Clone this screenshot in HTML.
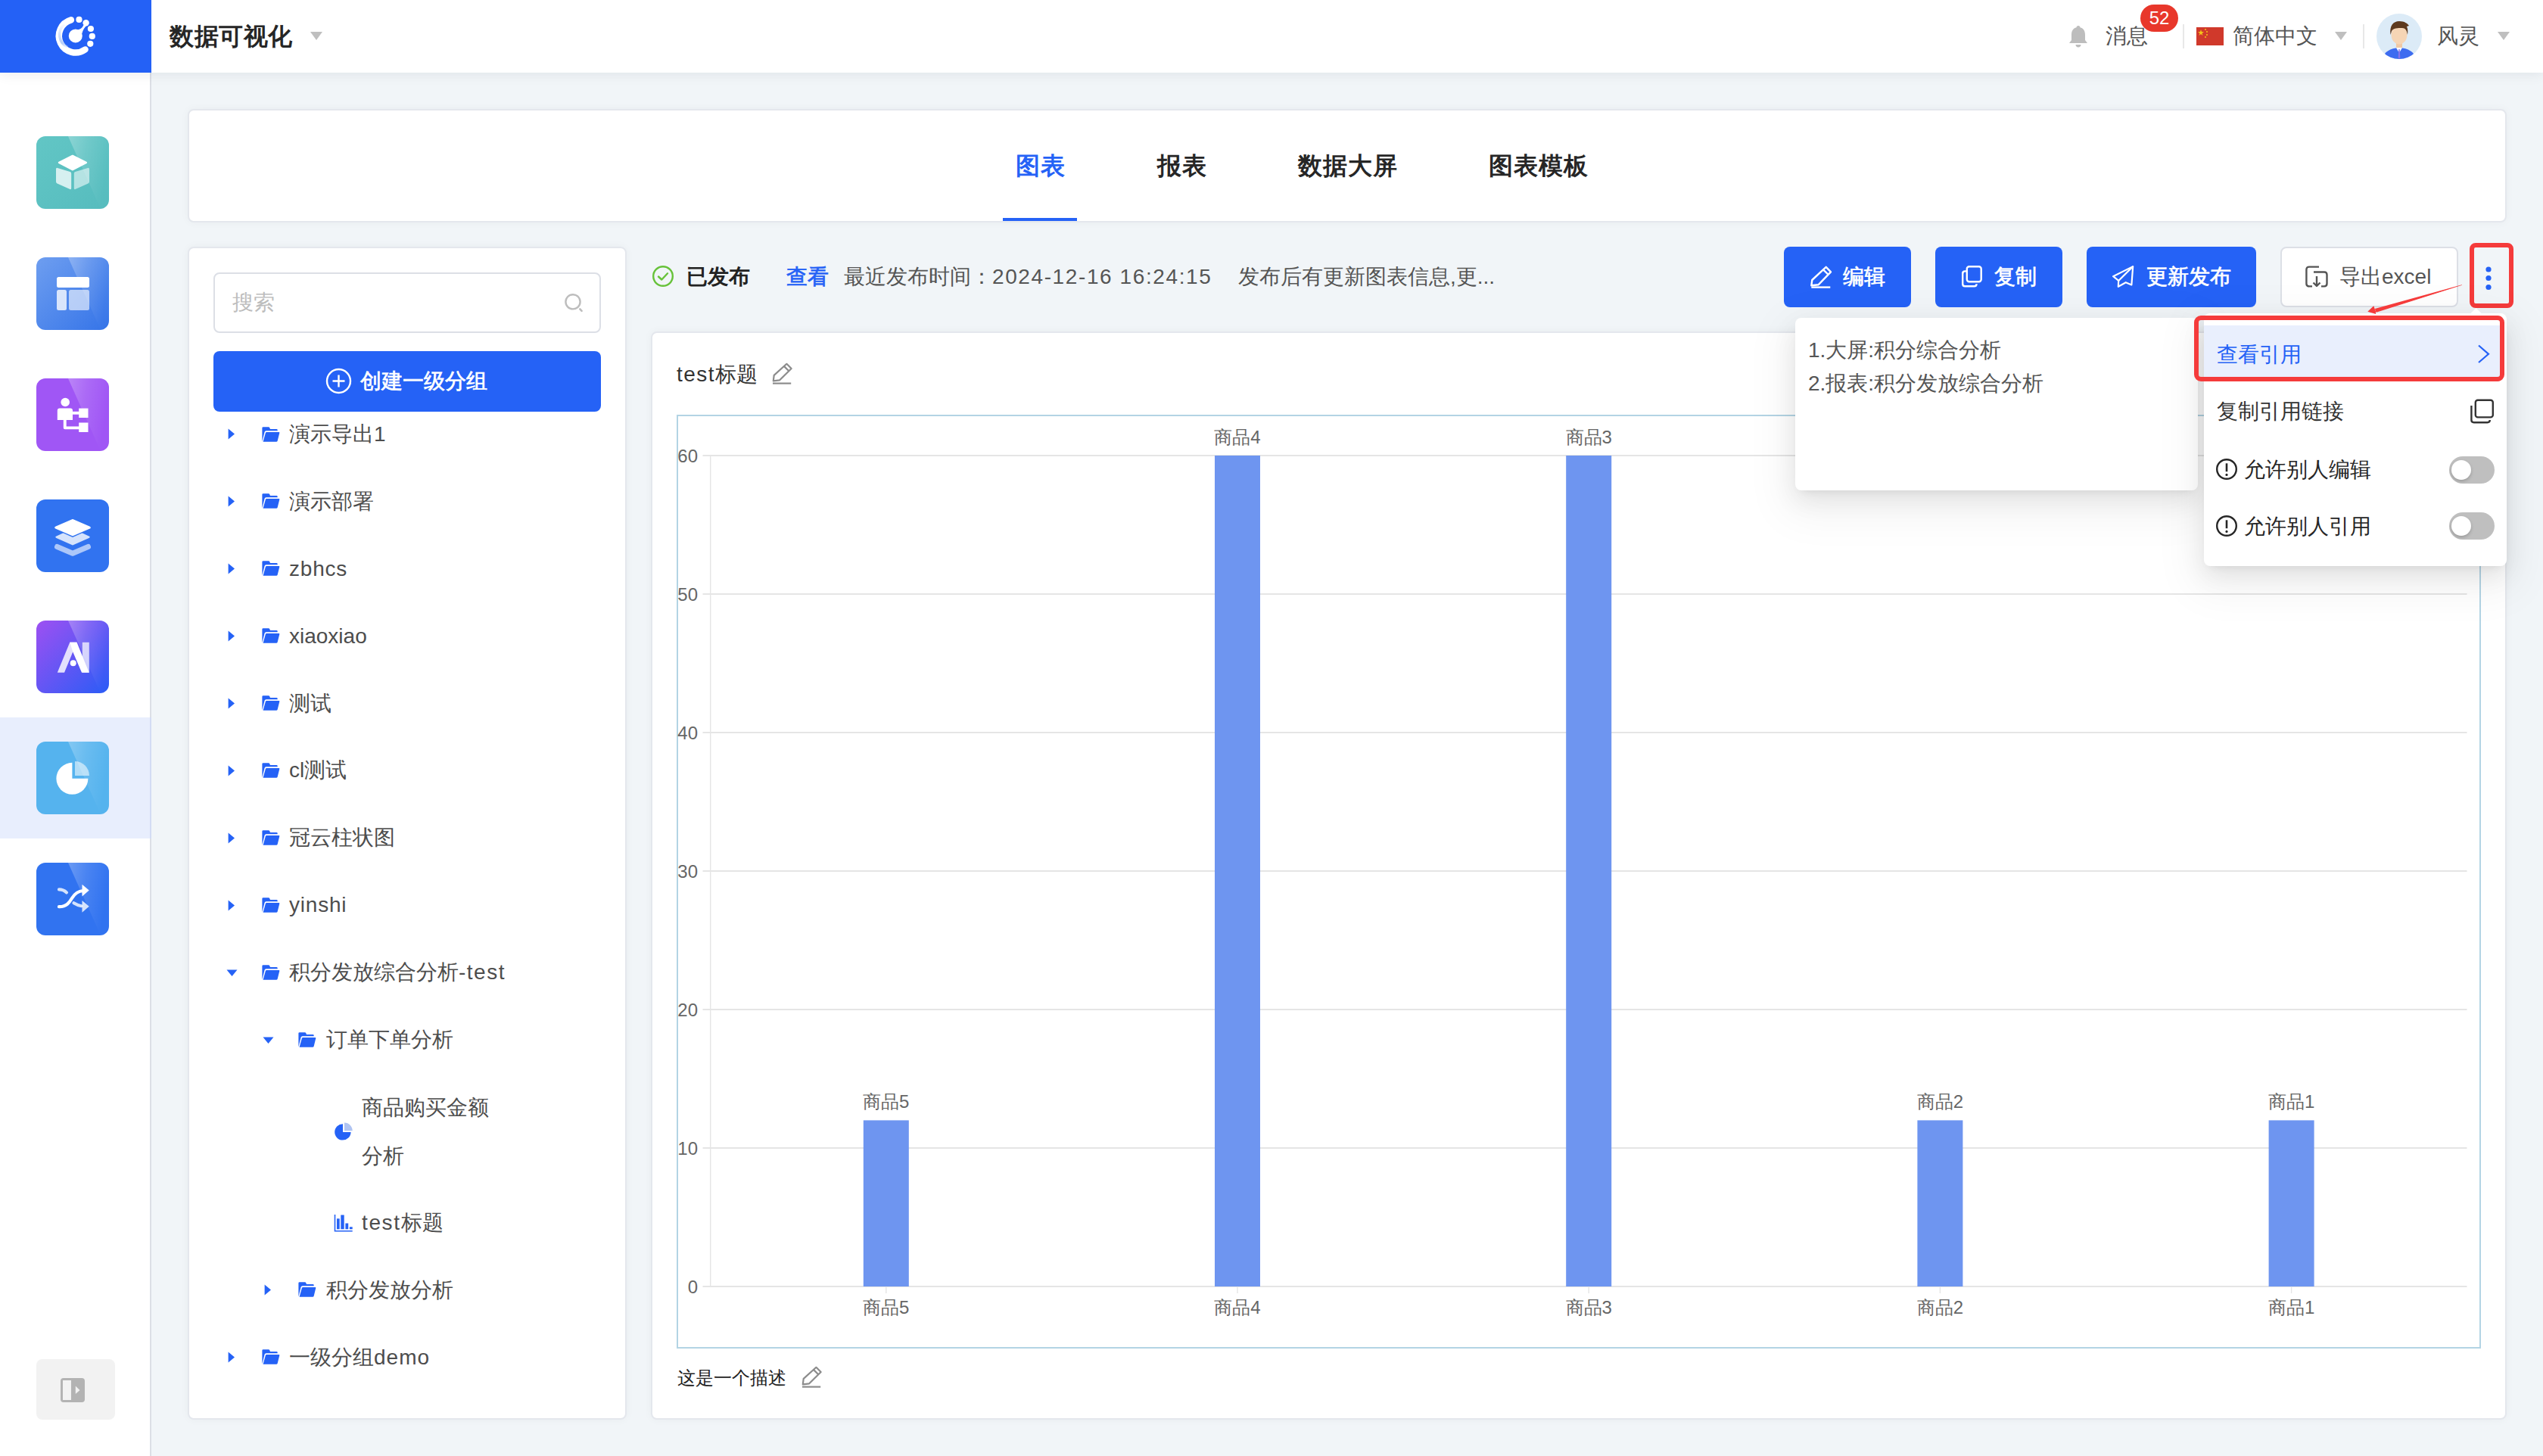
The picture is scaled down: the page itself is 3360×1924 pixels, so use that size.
<!DOCTYPE html>
<html><head><meta charset="utf-8">
<style>
*{box-sizing:border-box;margin:0;padding:0}
html,body{width:3360px;height:1924px;overflow:hidden;background:#F1F5F8;font-family:"Liberation Sans",sans-serif;color:#555}
.abs{position:absolute}
.t{position:absolute;white-space:nowrap;line-height:1}
/* header */
#hdr{position:absolute;left:0;top:0;width:3360px;height:96px;background:#fff;z-index:5;box-shadow:0 2px 16px rgba(0,21,41,0.08)}
#logo{position:absolute;left:0;top:0;width:200px;height:96px;background:#2461F6}
/* sidebar */
#side{position:absolute;left:0;top:96px;width:200px;height:1828px;background:#fff;border-right:2px solid #DCDFE6;z-index:3}
.sic{position:absolute;left:48px;width:96px;height:96px;border-radius:12px;overflow:hidden}
.sic .gl{position:absolute;left:0;top:0;width:96px;height:96px}
.card{position:absolute;background:#fff;border:2px solid #E4E7ED;border-radius:8px;box-shadow:0 0 12px rgba(20,30,60,0.04)}
</style></head>
<body>
<div id="hdr">
  <div id="logo"><svg width="200" height="96" viewBox="0 0 200 96">
    <defs><linearGradient id="lg1" gradientUnits="userSpaceOnUse" x1="0" y1="30" x2="0" y2="64"><stop offset="0" stop-color="#B4CCF8" stop-opacity="0"/><stop offset="0.8" stop-color="#B4CCF8" stop-opacity="1"/><stop offset="1" stop-color="#B4CCF8" stop-opacity="0"/></linearGradient></defs>
    <path d="M93.9 26.3 A22 22 0 1 0 112.6 65.4" fill="none" stroke="#fff" stroke-width="8.5" stroke-linecap="round"/>
    <path d="M85 32 A18.3 18.3 0 0 0 89.5 62.5" fill="none" stroke="url(#lg1)" stroke-width="3.4"/>
    <circle cx="99.8" cy="47.4" r="9" fill="#fff"/>
    <path d="M101 39.5 Q108 39 110.5 33 L116.5 32 Q110 37 108.5 44 Z" fill="#fff"/>
    <circle cx="113.6" cy="30.3" r="4.2" fill="#fff"/>
    <circle cx="104.5" cy="25.9" r="4.1" fill="#fff"/>
    <circle cx="119.9" cy="38" r="4.1" fill="#fff"/>
    <circle cx="121.8" cy="47.9" r="4.1" fill="#fff"/>
    <circle cx="119.3" cy="57.8" r="4.1" fill="#fff"/>
  </svg></div>
  <div class="t" style="left:224px;top:32px;font-size:32px;font-weight:bold;color:#262626;letter-spacing:0.6px">数据可视化</div>
  <svg class="abs" style="left:408px;top:41px" width="20" height="14" viewBox="0 0 20 14"><path d="M2 1 L18 1 L10 12 Z" fill="#BFBFBF"/></svg>
  <!-- right -->
  <svg class="abs" style="left:2732px;top:32px" width="28" height="32" viewBox="0 0 28 32"><path d="M14 2 C15.6 2 16.4 3 16.4 4.2 C21 5.4 23 9 23 14 L23 21 L26 25 L2 25 L5 21 L5 14 C5 9 7 5.4 11.6 4.2 C11.6 3 12.4 2 14 2 Z" fill="#BDBDBD"/><path d="M10.5 27 L17.5 27 C17.5 29 16 30.5 14 30.5 C12 30.5 10.5 29 10.5 27 Z" fill="#BDBDBD"/></svg>
  <div class="t" style="left:2782px;top:34px;font-size:28px;color:#555">消息</div>
  <div class="abs" style="left:2828px;top:6px;width:50px;height:36px;border-radius:18px;background:#E8372B;color:#fff;font-size:24px;line-height:36px;text-align:center">52</div>
  <div class="abs" style="left:2884px;top:32px;width:2px;height:32px;background:#E8E8E8"></div>
  <div class="abs" style="left:2902px;top:36px;width:36px;height:24px;background:#D0392B"><svg width="36" height="24" viewBox="0 0 36 24" style="display:block"><polygon points="6,3 7,6 10,6 7.5,8 8.5,11 6,9 3.5,11 4.5,8 2,6 5,6" fill="#F5C518"/><circle cx="12" cy="3" r="1" fill="#F5C518"/><circle cx="14" cy="6" r="1" fill="#F5C518"/><circle cx="14" cy="10" r="1" fill="#F5C518"/><circle cx="12" cy="13" r="1" fill="#F5C518"/></svg></div>
  <div class="t" style="left:2950px;top:34px;font-size:28px;color:#555">简体中文</div>
  <svg class="abs" style="left:3083px;top:41px" width="20" height="14" viewBox="0 0 20 14"><path d="M2 1 L18 1 L10 12 Z" fill="#BFBFBF"/></svg>
  <div class="abs" style="left:3122px;top:32px;width:2px;height:32px;background:#E8E8E8"></div>
  <div class="abs" style="left:3140px;top:18px;width:60px;height:60px;border-radius:30px;background:#DCEBF7;overflow:hidden">
    <svg width="60" height="60" viewBox="0 0 60 60"><path d="M8 60 C10 50 18 46 30 45 C42 46 50 50 52 60 Z" fill="#3D6CF0"/><path d="M26 45 L30 52 L34 45 Z" fill="#fff"/><path d="M29.3 47 L30.7 47 L31.3 58 L30 60 L28.7 58 Z" fill="#8A74E8"/><rect x="26" y="36" width="8" height="9" fill="#F0C9A5"/><ellipse cx="30" cy="28" rx="10.5" ry="12.5" fill="#F6D5B5"/><path d="M18.5 28 C17 16 22 10 30 10 C37 10 41 13 43 16 L40 17 C41.5 20 41.5 24 41 28 C40 22 38 19 34 19 C28 19 22 19 20 23 Z" fill="#5E3A1E"/></svg>
  </div>
  <div class="t" style="left:3220px;top:34px;font-size:28px;color:#555">风灵</div>
  <svg class="abs" style="left:3298px;top:41px" width="20" height="14" viewBox="0 0 20 14"><path d="M2 1 L18 1 L10 12 Z" fill="#BFBFBF"/></svg>
</div>
<div id="side">
<svg width="0" height="0" style="position:absolute"><defs>
<clipPath id="rc"><rect width="96" height="96" rx="12"/></clipPath>
<linearGradient id="gls" x1="0" y1="0" x2="1" y2="0.3"><stop offset="0" stop-color="#fff" stop-opacity="0.28"/><stop offset="0.45" stop-color="#fff" stop-opacity="0.12"/><stop offset="1" stop-color="#fff" stop-opacity="0"/></linearGradient>
<linearGradient id="g2" x1="0" y1="0" x2="1" y2="1"><stop offset="0" stop-color="#6E9EF0"/><stop offset="1" stop-color="#3574E8"/></linearGradient>
<linearGradient id="g5" x1="0" y1="0" x2="1" y2="1"><stop offset="0" stop-color="#9E50F2"/><stop offset="1" stop-color="#2A5CF6"/></linearGradient>
<linearGradient id="g1" x1="0" y1="0" x2="1" y2="1"><stop offset="0" stop-color="#62C6C5"/><stop offset="1" stop-color="#56BCBE"/></linearGradient>
</defs></svg>
<div class="abs" style="left:0;top:852px;width:198px;height:160px;background:#E8EEFD"></div><div class="abs" style="left:198px;top:852px;width:2px;height:160px;background:#D3DCF3"></div>
<svg class="abs" style="left:48px;top:84px" width="96" height="96" viewBox="0 0 96 96"><rect width="96" height="96" rx="12" fill="url(#g1)"/><g clip-path="url(#rc)"><path d="M42 0 L96 0 L96 96 L85 96 Z" fill="url(#gls)"/></g><path d="M47.9 26 L65.8 34.9 L47.9 44.1 L30.1 34.9 Z" fill="#fff" stroke="#fff" stroke-width="2.6" stroke-linejoin="round"/><path d="M26 43.5 Q26 41.3 28 41.9 L44.6 47 Q46.2 47.5 46.2 49.2 L46.2 68.8 Q46.2 70.8 44.4 70 L27.6 62.5 Q26 61.8 26 60 Z" fill="#fff" fill-opacity="0.75"/><path d="M49.8 49.2 Q49.8 47.5 51.4 47 L68 41.9 Q70 41.3 70 43.5 L70 60 Q70 61.8 68.4 62.5 L51.6 70 Q49.8 70.8 49.8 68.8 Z" fill="#fff" fill-opacity="0.55"/></svg><svg class="abs" style="left:48px;top:244px" width="96" height="96" viewBox="0 0 96 96"><rect width="96" height="96" rx="12" fill="url(#g2)"/><g clip-path="url(#rc)"><path d="M42 0 L96 0 L96 96 L85 96 Z" fill="url(#gls)"/></g><rect x="27" y="26" width="43" height="14" rx="2.5" fill="#fff"/><rect x="27" y="43" width="13" height="27" rx="2.5" fill="#fff" fill-opacity="0.78"/><rect x="43" y="43" width="27" height="27" rx="2.5" fill="#fff" fill-opacity="0.6"/></svg><svg class="abs" style="left:48px;top:404px" width="96" height="96" viewBox="0 0 96 96"><rect width="96" height="96" rx="12" fill="#A056F5"/><g clip-path="url(#rc)"><path d="M42 0 L96 0 L96 96 L85 96 Z" fill="url(#gls)"/></g><circle cx="38.2" cy="31.5" r="5.8" fill="#fff"/><path d="M27.8 42.6 Q27.8 39.6 30.8 39.6 L45 39.6 Q48 39.6 48 42.6 L48 55 L27.8 55 Z" fill="#fff"/><rect x="56.2" y="39.6" width="12.3" height="12.4" fill="#fff"/><rect x="47" y="43.8" width="10" height="3.9" fill="#fff"/><path d="M35.8 54 L39.7 54 L39.7 63.5 L57 63.5 L57 67.3 L37.8 67.3 Q35.8 67.3 35.8 65.3 Z" fill="#fff"/><rect x="56.2" y="58.5" width="12.3" height="12.5" fill="#fff"/></svg><svg class="abs" style="left:48px;top:564px" width="96" height="96" viewBox="0 0 96 96"><rect width="96" height="96" rx="12" fill="#3173F0"/><g clip-path="url(#rc)"></g><path d="M27.5 62.5 L48 71.2 L68.5 62.5" fill="none" stroke="#fff" stroke-opacity="0.6" stroke-width="7" stroke-linecap="round" stroke-linejoin="round"/><path d="M48 38.5 L69.5 48.6 Q72 49.8 69.5 51 L48 60.5 L26.5 51 Q24 49.8 26.5 48.6 Z" fill="#fff" fill-opacity="0.8" stroke="#fff" stroke-opacity="0" /><path d="M48 24.2 L73 35.6 Q76.5 37.2 73 38.8 L48 50 L23 38.8 Q19.5 37.2 23 35.6 Z" fill="#3173F0"/><path d="M48 26.8 L70 36.3 Q72.2 37.2 70 38.1 L48 47.6 L26 38.1 Q23.8 37.2 26 36.3 Z" fill="#fff" stroke="#fff" stroke-width="1.5" stroke-linejoin="round"/></svg><svg class="abs" style="left:48px;top:724px" width="96" height="96" viewBox="0 0 96 96"><rect width="96" height="96" rx="12" fill="url(#g5)"/><g clip-path="url(#rc)"><path d="M42 0 L96 0 L96 96 L85 96 Z" fill="url(#gls)"/></g><rect x="60.8" y="28.8" width="9" height="40" fill="#fff" fill-opacity="0.72"/><path d="M44.3 28.8 L53.5 28.8 L37 68.8 L27.8 68.8 Z" fill="#fff" fill-opacity="0.82"/><path d="M44.3 28.8 L53.5 28.8 L69.7 68.8 L60 68.8 L48.2 41.3 Z" fill="#fff"/><circle cx="48.7" cy="56.3" r="4" fill="#fff"/></svg><svg class="abs" style="left:48px;top:884px" width="96" height="96" viewBox="0 0 96 96"><rect width="96" height="96" rx="12" fill="#55B3EE"/><g clip-path="url(#rc)"><path d="M42 0 L96 0 L96 96 L85 96 Z" fill="url(#gls)"/></g><path d="M47.4 27.8 L47.4 48.8 L68.4 48.8 A21 21 0 1 1 47.4 27.8 Z" fill="#fff"/><path d="M51 26 A19 19 0 0 1 70 45 L51 45 Z" fill="#fff" fill-opacity="0.55"/></svg><svg class="abs" style="left:48px;top:1044px" width="96" height="96" viewBox="0 0 96 96"><rect width="96" height="96" rx="12" fill="#3173F0"/><g clip-path="url(#rc)"><path d="M42 0 L96 0 L96 96 L85 96 Z" fill="url(#gls)"/></g><path d="M30 58.2 C40 58.5 44 52 47 47 C50.5 41 55 37.5 62 37" fill="none" stroke="#fff" stroke-width="4.2" stroke-linecap="round"/><path d="M60.5 28.8 L69.7 36.6 L60.5 44.6 Z" fill="#fff"/><path d="M30 35.4 C34 35.4 37.5 37 40 39.4" fill="none" stroke="#fff" stroke-opacity="0.8" stroke-width="4.2" stroke-linecap="round"/><path d="M49.5 53.3 C53 55.5 56 56.6 59.5 57.2" fill="none" stroke="#fff" stroke-opacity="0.8" stroke-width="4.2" stroke-linecap="round"/><path d="M60.5 50 L69.7 57.7 L60.5 65.8 Z" fill="#fff" fill-opacity="0.8"/></svg><div class="abs" style="left:48px;top:1700px;width:104px;height:80px;border-radius:8px;background:#F2F2F2"><svg class="abs" style="left:32px;top:25px" width="32" height="32" viewBox="0 0 32 32"><rect width="32" height="32" rx="4" fill="#B3B3B3"/><rect x="3" y="3" width="11" height="26" fill="#F2F2F2"/><path d="M19.8 10.5 L25.5 16 L19.8 21 Z" fill="#F2F2F2"/></svg></div>
</div>
<!-- tabs card -->
<div class="card" style="left:248px;top:144px;width:3064px;height:150px"></div>
<div class="t" style="left:1342px;top:203px;font-size:32px;font-weight:bold;color:#2562F6;letter-spacing:1px">图表</div>
<div class="t" style="left:1529px;top:203px;font-size:32px;font-weight:bold;color:#262626;letter-spacing:1px">报表</div>
<div class="t" style="left:1715px;top:203px;font-size:32px;font-weight:bold;color:#262626;letter-spacing:1px">数据大屏</div>
<div class="t" style="left:1967px;top:203px;font-size:32px;font-weight:bold;color:#262626;letter-spacing:1px">图表模板</div>
<div class="abs" style="left:1325px;top:288px;width:98px;height:4px;background:#2562F6"></div>

<!-- left panel -->
<div class="card" style="left:248px;top:326px;width:580px;height:1550px"></div>
<div class="abs" style="left:282px;top:360px;width:512px;height:80px;border:2px solid #DCDFE6;border-radius:8px;background:#fff"></div>
<div class="t" style="left:307px;top:386px;font-size:28px;color:#BDBDBD">搜索</div>
<svg class="abs" style="left:744px;top:386px" width="28" height="28" viewBox="0 0 28 28"><circle cx="13" cy="12.8" r="9.6" fill="none" stroke="#BDBDBD" stroke-width="2.4"/><path d="M22.3 22.4 L24.6 24.8" stroke="#BDBDBD" stroke-width="2.6" stroke-linecap="round"/></svg>
<div class="abs" style="left:282px;top:464px;width:512px;height:80px;border-radius:8px;background:#2562F6"></div>
<svg class="abs" style="left:430px;top:486px" width="36" height="36" viewBox="0 0 36 36"><circle cx="17.5" cy="17.5" r="15.5" fill="none" stroke="#fff" stroke-width="2.4"/><path d="M17.5 9.5 V25.5 M9.5 17.5 H25.5" stroke="#fff" stroke-width="2.4"/></svg>
<div class="t" style="left:476px;top:490px;font-size:28px;color:#fff;-webkit-text-stroke:0.7px #fff">创建一级分组</div>
<svg class="abs" style="left:301px;top:566px" width="10" height="15" viewBox="0 0 10 15"><path d="M0.6 0.5 L9 7.5 L0.6 14.5 Z" fill="#2562F6"/></svg>
<svg class="abs" style="left:346px;top:564px" width="24" height="21" viewBox="0 0 24 21"><path d="M0.4 19.5 L0.4 1.6 Q0.4 0.2 1.8 0.2 L8.8 0.2 Q9.9 0.2 10.4 1.4 L11 2.9 L19.3 2.9 Q20.7 2.9 20.7 4.3 L20.7 5.2 L5.6 5.2 Q4 5.2 3.6 6.7 Z" fill="#2562F6"/><path d="M4.9 7.9 Q5.2 6.9 6.3 6.9 L22.4 6.9 Q23.6 6.9 23.3 8.1 L20.7 18.6 Q20.3 19.8 19.1 19.8 L1.6 19.8 Z" fill="#2562F6"/></svg>
<div class="t" style="left:382px;top:560px;font-size:28px;color:#4D4D4D">演示导出1</div>
<svg class="abs" style="left:301px;top:655px" width="10" height="15" viewBox="0 0 10 15"><path d="M0.6 0.5 L9 7.5 L0.6 14.5 Z" fill="#2562F6"/></svg>
<svg class="abs" style="left:346px;top:652px" width="24" height="21" viewBox="0 0 24 21"><path d="M0.4 19.5 L0.4 1.6 Q0.4 0.2 1.8 0.2 L8.8 0.2 Q9.9 0.2 10.4 1.4 L11 2.9 L19.3 2.9 Q20.7 2.9 20.7 4.3 L20.7 5.2 L5.6 5.2 Q4 5.2 3.6 6.7 Z" fill="#2562F6"/><path d="M4.9 7.9 Q5.2 6.9 6.3 6.9 L22.4 6.9 Q23.6 6.9 23.3 8.1 L20.7 18.6 Q20.3 19.8 19.1 19.8 L1.6 19.8 Z" fill="#2562F6"/></svg>
<div class="t" style="left:382px;top:649px;font-size:28px;color:#4D4D4D">演示部署</div>
<svg class="abs" style="left:301px;top:744px" width="10" height="15" viewBox="0 0 10 15"><path d="M0.6 0.5 L9 7.5 L0.6 14.5 Z" fill="#2562F6"/></svg>
<svg class="abs" style="left:346px;top:741px" width="24" height="21" viewBox="0 0 24 21"><path d="M0.4 19.5 L0.4 1.6 Q0.4 0.2 1.8 0.2 L8.8 0.2 Q9.9 0.2 10.4 1.4 L11 2.9 L19.3 2.9 Q20.7 2.9 20.7 4.3 L20.7 5.2 L5.6 5.2 Q4 5.2 3.6 6.7 Z" fill="#2562F6"/><path d="M4.9 7.9 Q5.2 6.9 6.3 6.9 L22.4 6.9 Q23.6 6.9 23.3 8.1 L20.7 18.6 Q20.3 19.8 19.1 19.8 L1.6 19.8 Z" fill="#2562F6"/></svg>
<div class="t" style="left:382px;top:738px;font-size:28px;color:#4D4D4D;letter-spacing:0.8px">zbhcs</div>
<svg class="abs" style="left:301px;top:833px" width="10" height="15" viewBox="0 0 10 15"><path d="M0.6 0.5 L9 7.5 L0.6 14.5 Z" fill="#2562F6"/></svg>
<svg class="abs" style="left:346px;top:830px" width="24" height="21" viewBox="0 0 24 21"><path d="M0.4 19.5 L0.4 1.6 Q0.4 0.2 1.8 0.2 L8.8 0.2 Q9.9 0.2 10.4 1.4 L11 2.9 L19.3 2.9 Q20.7 2.9 20.7 4.3 L20.7 5.2 L5.6 5.2 Q4 5.2 3.6 6.7 Z" fill="#2562F6"/><path d="M4.9 7.9 Q5.2 6.9 6.3 6.9 L22.4 6.9 Q23.6 6.9 23.3 8.1 L20.7 18.6 Q20.3 19.8 19.1 19.8 L1.6 19.8 Z" fill="#2562F6"/></svg>
<div class="t" style="left:382px;top:827px;font-size:28px;color:#4D4D4D">xiaoxiao</div>
<svg class="abs" style="left:301px;top:922px" width="10" height="15" viewBox="0 0 10 15"><path d="M0.6 0.5 L9 7.5 L0.6 14.5 Z" fill="#2562F6"/></svg>
<svg class="abs" style="left:346px;top:919px" width="24" height="21" viewBox="0 0 24 21"><path d="M0.4 19.5 L0.4 1.6 Q0.4 0.2 1.8 0.2 L8.8 0.2 Q9.9 0.2 10.4 1.4 L11 2.9 L19.3 2.9 Q20.7 2.9 20.7 4.3 L20.7 5.2 L5.6 5.2 Q4 5.2 3.6 6.7 Z" fill="#2562F6"/><path d="M4.9 7.9 Q5.2 6.9 6.3 6.9 L22.4 6.9 Q23.6 6.9 23.3 8.1 L20.7 18.6 Q20.3 19.8 19.1 19.8 L1.6 19.8 Z" fill="#2562F6"/></svg>
<div class="t" style="left:382px;top:916px;font-size:28px;color:#4D4D4D">测试</div>
<svg class="abs" style="left:301px;top:1011px" width="10" height="15" viewBox="0 0 10 15"><path d="M0.6 0.5 L9 7.5 L0.6 14.5 Z" fill="#2562F6"/></svg>
<svg class="abs" style="left:346px;top:1008px" width="24" height="21" viewBox="0 0 24 21"><path d="M0.4 19.5 L0.4 1.6 Q0.4 0.2 1.8 0.2 L8.8 0.2 Q9.9 0.2 10.4 1.4 L11 2.9 L19.3 2.9 Q20.7 2.9 20.7 4.3 L20.7 5.2 L5.6 5.2 Q4 5.2 3.6 6.7 Z" fill="#2562F6"/><path d="M4.9 7.9 Q5.2 6.9 6.3 6.9 L22.4 6.9 Q23.6 6.9 23.3 8.1 L20.7 18.6 Q20.3 19.8 19.1 19.8 L1.6 19.8 Z" fill="#2562F6"/></svg>
<div class="t" style="left:382px;top:1004px;font-size:28px;color:#4D4D4D">cl测试</div>
<svg class="abs" style="left:301px;top:1100px" width="10" height="15" viewBox="0 0 10 15"><path d="M0.6 0.5 L9 7.5 L0.6 14.5 Z" fill="#2562F6"/></svg>
<svg class="abs" style="left:346px;top:1097px" width="24" height="21" viewBox="0 0 24 21"><path d="M0.4 19.5 L0.4 1.6 Q0.4 0.2 1.8 0.2 L8.8 0.2 Q9.9 0.2 10.4 1.4 L11 2.9 L19.3 2.9 Q20.7 2.9 20.7 4.3 L20.7 5.2 L5.6 5.2 Q4 5.2 3.6 6.7 Z" fill="#2562F6"/><path d="M4.9 7.9 Q5.2 6.9 6.3 6.9 L22.4 6.9 Q23.6 6.9 23.3 8.1 L20.7 18.6 Q20.3 19.8 19.1 19.8 L1.6 19.8 Z" fill="#2562F6"/></svg>
<div class="t" style="left:382px;top:1093px;font-size:28px;color:#4D4D4D">冠云柱状图</div>
<svg class="abs" style="left:301px;top:1189px" width="10" height="15" viewBox="0 0 10 15"><path d="M0.6 0.5 L9 7.5 L0.6 14.5 Z" fill="#2562F6"/></svg>
<svg class="abs" style="left:346px;top:1186px" width="24" height="21" viewBox="0 0 24 21"><path d="M0.4 19.5 L0.4 1.6 Q0.4 0.2 1.8 0.2 L8.8 0.2 Q9.9 0.2 10.4 1.4 L11 2.9 L19.3 2.9 Q20.7 2.9 20.7 4.3 L20.7 5.2 L5.6 5.2 Q4 5.2 3.6 6.7 Z" fill="#2562F6"/><path d="M4.9 7.9 Q5.2 6.9 6.3 6.9 L22.4 6.9 Q23.6 6.9 23.3 8.1 L20.7 18.6 Q20.3 19.8 19.1 19.8 L1.6 19.8 Z" fill="#2562F6"/></svg>
<div class="t" style="left:382px;top:1182px;font-size:28px;color:#4D4D4D;letter-spacing:0.8px">yinshi</div>
<svg class="abs" style="left:299px;top:1281px" width="15" height="10" viewBox="0 0 15 10"><path d="M0.5 0.5 L14.5 0.5 L7.5 9 Z" fill="#2562F6"/></svg>
<svg class="abs" style="left:346px;top:1275px" width="24" height="21" viewBox="0 0 24 21"><path d="M0.4 19.5 L0.4 1.6 Q0.4 0.2 1.8 0.2 L8.8 0.2 Q9.9 0.2 10.4 1.4 L11 2.9 L19.3 2.9 Q20.7 2.9 20.7 4.3 L20.7 5.2 L5.6 5.2 Q4 5.2 3.6 6.7 Z" fill="#2562F6"/><path d="M4.9 7.9 Q5.2 6.9 6.3 6.9 L22.4 6.9 Q23.6 6.9 23.3 8.1 L20.7 18.6 Q20.3 19.8 19.1 19.8 L1.6 19.8 Z" fill="#2562F6"/></svg>
<div class="t" style="left:382px;top:1271px;font-size:28px;color:#4D4D4D">积分发放综合分析<span style="letter-spacing:1.5px">-test</span></div>
<svg class="abs" style="left:347px;top:1370px" width="15" height="10" viewBox="0 0 15 10"><path d="M0.5 0.5 L14.5 0.5 L7.5 9 Z" fill="#2562F6"/></svg>
<svg class="abs" style="left:394px;top:1364px" width="24" height="21" viewBox="0 0 24 21"><path d="M0.4 19.5 L0.4 1.6 Q0.4 0.2 1.8 0.2 L8.8 0.2 Q9.9 0.2 10.4 1.4 L11 2.9 L19.3 2.9 Q20.7 2.9 20.7 4.3 L20.7 5.2 L5.6 5.2 Q4 5.2 3.6 6.7 Z" fill="#2562F6"/><path d="M4.9 7.9 Q5.2 6.9 6.3 6.9 L22.4 6.9 Q23.6 6.9 23.3 8.1 L20.7 18.6 Q20.3 19.8 19.1 19.8 L1.6 19.8 Z" fill="#2562F6"/></svg>
<div class="t" style="left:431px;top:1360px;font-size:28px;color:#4D4D4D">订单下单分析</div>
<svg class="abs" style="left:441px;top:1482px" width="26" height="26" viewBox="0 0 26 26"><path d="M12 3.2 L12 14 L22.6 14 A10.7 10.7 0 1 1 12 3.2 Z" fill="#2562F6"/><path d="M14 1.5 A10.7 10.7 0 0 1 24.7 12.2 L14 12.2 Z" fill="#B0C4F2"/></svg>
<div class="t" style="left:478px;top:1450px;font-size:28px;color:#4D4D4D">商品购买金额</div>
<div class="t" style="left:478px;top:1514px;font-size:28px;color:#4D4D4D">分析</div>
<svg class="abs" style="left:441px;top:1605px" width="26" height="24" viewBox="0 0 26 24"><path d="M1.5 0 V21.8 H24.7" fill="none" stroke="#2562F6" stroke-width="1.6"/><rect x="4" y="5.3" width="3.7" height="14" fill="#2562F6"/><rect x="9.3" y="0.5" width="4.4" height="18.8" fill="#2562F6"/><rect x="15.4" y="11.5" width="3.8" height="7.8" fill="#2562F6"/><rect x="20.9" y="16.3" width="3.8" height="3" fill="#2562F6"/></svg>
<div class="t" style="left:478px;top:1602px;font-size:28px;color:#4D4D4D"><span style="letter-spacing:1.6px">test</span>标题</div>
<svg class="abs" style="left:349px;top:1697px" width="10" height="15" viewBox="0 0 10 15"><path d="M0.6 0.5 L9 7.5 L0.6 14.5 Z" fill="#2562F6"/></svg>
<svg class="abs" style="left:394px;top:1694px" width="24" height="21" viewBox="0 0 24 21"><path d="M0.4 19.5 L0.4 1.6 Q0.4 0.2 1.8 0.2 L8.8 0.2 Q9.9 0.2 10.4 1.4 L11 2.9 L19.3 2.9 Q20.7 2.9 20.7 4.3 L20.7 5.2 L5.6 5.2 Q4 5.2 3.6 6.7 Z" fill="#2562F6"/><path d="M4.9 7.9 Q5.2 6.9 6.3 6.9 L22.4 6.9 Q23.6 6.9 23.3 8.1 L20.7 18.6 Q20.3 19.8 19.1 19.8 L1.6 19.8 Z" fill="#2562F6"/></svg>
<div class="t" style="left:431px;top:1691px;font-size:28px;color:#4D4D4D">积分发放分析</div>
<svg class="abs" style="left:301px;top:1786px" width="10" height="15" viewBox="0 0 10 15"><path d="M0.6 0.5 L9 7.5 L0.6 14.5 Z" fill="#2562F6"/></svg>
<svg class="abs" style="left:346px;top:1783px" width="24" height="21" viewBox="0 0 24 21"><path d="M0.4 19.5 L0.4 1.6 Q0.4 0.2 1.8 0.2 L8.8 0.2 Q9.9 0.2 10.4 1.4 L11 2.9 L19.3 2.9 Q20.7 2.9 20.7 4.3 L20.7 5.2 L5.6 5.2 Q4 5.2 3.6 6.7 Z" fill="#2562F6"/><path d="M4.9 7.9 Q5.2 6.9 6.3 6.9 L22.4 6.9 Q23.6 6.9 23.3 8.1 L20.7 18.6 Q20.3 19.8 19.1 19.8 L1.6 19.8 Z" fill="#2562F6"/></svg>
<div class="t" style="left:382px;top:1780px;font-size:28px;color:#4D4D4D">一级分组<span style="letter-spacing:1px">demo</span></div>
<!-- chart card -->
<svg class="abs" style="left:860px;top:349px" width="32" height="32" viewBox="0 0 32 32"><circle cx="16" cy="16" r="12.8" fill="none" stroke="#67C23A" stroke-width="2.4"/><path d="M10 16.5 L14.3 20.5 L22 12.3" fill="none" stroke="#67C23A" stroke-width="2.4" stroke-linecap="round" stroke-linejoin="round"/></svg>
<div class="t" style="left:907px;top:352px;font-size:28px;font-weight:bold;color:#222">已发布</div>
<div class="t" style="left:1039px;top:352px;font-size:28px;color:#2562F6;-webkit-text-stroke:0.7px #2562F6">查看</div>
<div class="t" style="left:1115px;top:352px;font-size:28px;color:#555">最近发布时间：<span style="letter-spacing:1.6px">2024-12-16 16:24:15</span></div>
<div class="t" style="left:1636px;top:352px;font-size:28px;color:#555">发布后有更新图表信息,更...</div>
<div class="abs" style="left:2357px;top:326px;width:168px;height:80px;border-radius:8px;background:#2562F6;"></div>
<div class="abs" style="left:2557px;top:326px;width:168px;height:80px;border-radius:8px;background:#2562F6;"></div>
<div class="abs" style="left:2757px;top:326px;width:224px;height:80px;border-radius:8px;background:#2562F6;"></div>
<div class="abs" style="left:3013px;top:326px;width:235px;height:80px;border-radius:8px;background:#fff;border:2px solid #DCDFE6;"></div>
<svg class="abs" style="left:2389px;top:349px" width="34" height="34" viewBox="0 0 34 34"><path d="M23.7 3.8 L30 10.4 L13.5 27.3 L4.3 28.3 L5.3 21 Z" fill="none" stroke="#fff" stroke-width="2.4" stroke-linejoin="round"/><path d="M20 7.3 L26.8 14" stroke="#fff" stroke-width="2.4"/><path d="M4.3 30.6 H29.3" stroke="#fff" stroke-width="2.4"/></svg>
<div class="t" style="left:2435px;top:352px;font-size:28px;color:#fff;-webkit-text-stroke:0.7px #fff">编辑</div>
<svg class="abs" style="left:2589px;top:349px" width="32" height="32" viewBox="0 0 32 32"><rect x="9.8" y="3.2" width="18.9" height="20" rx="3" fill="none" stroke="#fff" stroke-width="2.4"/><path d="M4.2 11 L4.2 26.3 Q4.2 29.3 7.2 29.3 L19.6 29.3 Q22.6 29.3 22.6 26.3" fill="none" stroke="#fff" stroke-width="2.4"/><path d="M9.8 9.4 L7.2 9.4 Q4.2 9.4 4.2 12.4" fill="none" stroke="#fff" stroke-width="2.4"/></svg>
<div class="t" style="left:2635px;top:352px;font-size:28px;color:#fff;-webkit-text-stroke:0.7px #fff">复制</div>
<svg class="abs" style="left:2789px;top:349px" width="32" height="32" viewBox="0 0 34 34"><path d="M3.3 17.2 L31 3.3 L29.1 29.1 L21 25.7 L10.4 31.6 L10.8 23.3 Z" fill="none" stroke="#fff" stroke-width="2.3" stroke-linejoin="round"/><path d="M10.8 23.3 L31 3.3" stroke="#fff" stroke-width="2.3"/></svg>
<div class="t" style="left:2836px;top:352px;font-size:28px;color:#fff;-webkit-text-stroke:0.7px #fff">更新发布</div>
<svg class="abs" style="left:3044px;top:349px" width="34" height="32" viewBox="0 0 34 32"><path d="M20 3.6 H7 Q3.4 3.6 3.4 7.2 V25.8 Q3.4 29.4 7 29.4 H11" fill="none" stroke="#555" stroke-width="2.4"/><path d="M13 10.5 H27 Q30.5 10.5 30.5 14 V25.8 Q30.5 29.4 27 29.4 H23" fill="none" stroke="#555" stroke-width="2.4"/><path d="M17 16 V29 M12.5 24.5 L17 29 L21.5 24.5" fill="none" stroke="#555" stroke-width="2.4" stroke-linejoin="round"/></svg>
<div class="t" style="left:3091px;top:352px;font-size:28px;color:#555">导出excel</div>
<div class="abs" style="left:3263px;top:321px;width:58px;height:86px;border:6px solid #F53B3B;border-radius:8px"></div>
<svg class="abs" style="left:3280px;top:349px" width="16" height="38" viewBox="0 0 16 38"><circle cx="8" cy="7" r="3.6" fill="#2562F6"/><circle cx="8" cy="18.5" r="3.6" fill="#2562F6"/><circle cx="8" cy="30.5" r="3.6" fill="#2562F6"/></svg>
<div class="card" style="left:860px;top:438px;width:2452px;height:1438px"></div>
<div class="t" style="left:894px;top:481px;font-size:28px;color:#333"><span style="letter-spacing:1.5px">test</span>标题</div>
<svg class="abs" style="left:1019px;top:479px" width="28" height="30" viewBox="0 0 28 30"><path d="M20.4 1.8 L26.6 8 L11.2 23.3 L2.8 24.3 L3.7 16.9 Z" fill="none" stroke="#8C8C8C" stroke-width="2.2" stroke-linejoin="round"/><path d="M17.1 5.1 L23.3 11.3" stroke="#8C8C8C" stroke-width="2.2"/><path d="M2 27.6 H26.2" stroke="#8C8C8C" stroke-width="2.2"/></svg>
<div class="abs" style="left:894px;top:548px;width:2384px;height:1234px;border:2px solid #B3D4E4"></div>
<svg class="abs" style="left:0;top:0" width="3360" height="1924" viewBox="0 0 3360 1924">
<rect x="928.5" y="1699.0" width="2331" height="2" fill="#E5E5E5"/>
<text x="922" y="1708.6" font-size="24" fill="#666" text-anchor="end" font-family="Liberation Sans">0</text>
<rect x="928.5" y="1516.0" width="2331" height="2" fill="#E5E5E5"/>
<text x="922" y="1525.6" font-size="24" fill="#666" text-anchor="end" font-family="Liberation Sans">10</text>
<rect x="928.5" y="1333.0" width="2331" height="2" fill="#E5E5E5"/>
<text x="922" y="1342.6" font-size="24" fill="#666" text-anchor="end" font-family="Liberation Sans">20</text>
<rect x="928.5" y="1150.0" width="2331" height="2" fill="#E5E5E5"/>
<text x="922" y="1159.6" font-size="24" fill="#666" text-anchor="end" font-family="Liberation Sans">30</text>
<rect x="928.5" y="967.0" width="2331" height="2" fill="#E5E5E5"/>
<text x="922" y="976.6" font-size="24" fill="#666" text-anchor="end" font-family="Liberation Sans">40</text>
<rect x="928.5" y="784.0" width="2331" height="2" fill="#E5E5E5"/>
<text x="922" y="793.6" font-size="24" fill="#666" text-anchor="end" font-family="Liberation Sans">50</text>
<rect x="928.5" y="601.0" width="2331" height="2" fill="#E5E5E5"/>
<text x="922" y="610.6" font-size="24" fill="#666" text-anchor="end" font-family="Liberation Sans">60</text>
<rect x="938" y="601" width="1.4" height="1099" fill="#E5E5E5"/>
<rect x="1140.8" y="1480.4" width="60" height="219.6" fill="#6E95F0"/>
<rect x="1170.1" y="1700" width="1.4" height="9" fill="#E5E5E5"/>
<text x="1170.8" y="1464.4" font-size="24" fill="#666" text-anchor="middle" font-family="Liberation Sans">商品5</text>
<text x="1170.8" y="1736" font-size="24" fill="#666" text-anchor="middle" font-family="Liberation Sans">商品5</text>
<rect x="1605.0" y="602.0" width="60" height="1098.0" fill="#6E95F0"/>
<rect x="1634.3" y="1700" width="1.4" height="9" fill="#E5E5E5"/>
<text x="1635.0" y="586.0" font-size="24" fill="#666" text-anchor="middle" font-family="Liberation Sans">商品4</text>
<text x="1635.0" y="1736" font-size="24" fill="#666" text-anchor="middle" font-family="Liberation Sans">商品4</text>
<rect x="2069.2" y="602.0" width="60" height="1098.0" fill="#6E95F0"/>
<rect x="2098.5" y="1700" width="1.4" height="9" fill="#E5E5E5"/>
<text x="2099.2" y="586.0" font-size="24" fill="#666" text-anchor="middle" font-family="Liberation Sans">商品3</text>
<text x="2099.2" y="1736" font-size="24" fill="#666" text-anchor="middle" font-family="Liberation Sans">商品3</text>
<rect x="2533.4" y="1480.4" width="60" height="219.6" fill="#6E95F0"/>
<rect x="2562.7" y="1700" width="1.4" height="9" fill="#E5E5E5"/>
<text x="2563.4" y="1464.4" font-size="24" fill="#666" text-anchor="middle" font-family="Liberation Sans">商品2</text>
<text x="2563.4" y="1736" font-size="24" fill="#666" text-anchor="middle" font-family="Liberation Sans">商品2</text>
<rect x="2997.6" y="1480.4" width="60" height="219.6" fill="#6E95F0"/>
<rect x="3026.9" y="1700" width="1.4" height="9" fill="#E5E5E5"/>
<text x="3027.6" y="1464.4" font-size="24" fill="#666" text-anchor="middle" font-family="Liberation Sans">商品1</text>
<text x="3027.6" y="1736" font-size="24" fill="#666" text-anchor="middle" font-family="Liberation Sans">商品1</text>
</svg>
<div class="t" style="left:895px;top:1809px;font-size:24px;color:#222">这是一个描述</div>
<svg class="abs" style="left:1058px;top:1805px" width="28" height="30" viewBox="0 0 28 30"><path d="M20.4 1.8 L26.6 8 L11.2 23.3 L2.8 24.3 L3.7 16.9 Z" fill="none" stroke="#8C8C8C" stroke-width="2.2" stroke-linejoin="round"/><path d="M17.1 5.1 L23.3 11.3" stroke="#8C8C8C" stroke-width="2.2"/><path d="M2 27.6 H26.2" stroke="#8C8C8C" stroke-width="2.2"/></svg>

<!-- popovers -->
<div class="abs" style="left:2372px;top:420px;width:532px;height:228px;background:#fff;border-radius:8px;box-shadow:0 12px 32px 0 rgba(0,0,0,0.08),0 6px 12px -8px rgba(0,0,0,0.12),0 18px 56px 16px rgba(0,0,0,0.05);z-index:10">
  <div class="t" style="left:17px;top:29px;font-size:28px;color:#555">1.大屏:积分综合分析</div>
  <div class="t" style="left:17px;top:73px;font-size:28px;color:#555">2.报表:积分发放综合分析</div>
</div>
<div class="abs" style="left:2912px;top:414px;width:400px;height:334px;background:#fff;border-radius:8px;box-shadow:0 12px 32px 0 rgba(0,0,0,0.08),0 6px 12px -8px rgba(0,0,0,0.12),0 18px 56px 16px rgba(0,0,0,0.05);z-index:10">
  <div class="abs" style="left:352px;top:-4px;width:15px;height:15px;background:#fff;transform:rotate(45deg)"></div>
  <div class="abs" style="left:0;top:16px;width:392px;height:68px;background:#E9EFFD"></div>
  <div class="t" style="left:17px;top:41px;font-size:28px;color:#2562F6">查看引用</div>
  <svg class="abs" style="left:360px;top:40px" width="20" height="28" viewBox="0 0 20 28"><path d="M3 2.5 L16 13.8 L3 25" fill="none" stroke="#2562F6" stroke-width="2.2"/></svg>
  <div class="t" style="left:17px;top:116px;font-size:28px;color:#333">复制引用链接</div>
  <svg class="abs" style="left:350px;top:112px" width="36" height="36" viewBox="0 0 36 36"><rect x="8.8" y="2.8" width="23" height="22.6" rx="3" fill="none" stroke="#333" stroke-width="2.4"/><path d="M3.4 10 V29 Q3.4 32.2 6.6 32.2 H24.6 Q27.8 32.2 27.8 29" fill="none" stroke="#333" stroke-width="2.4"/></svg>
  <svg class="abs" style="left:14px;top:190px" width="32" height="32" viewBox="0 0 32 32"><circle cx="16" cy="16" r="12.8" fill="none" stroke="#262626" stroke-width="2.4"/><path d="M16 8.3 V19.2" stroke="#262626" stroke-width="2.6"/><circle cx="16" cy="23.4" r="1.6" fill="#262626"/></svg>
  <div class="t" style="left:53px;top:193px;font-size:28px;color:#262626">允许别人编辑</div>
  <div class="abs" style="left:324px;top:189px;width:60px;height:36px;border-radius:18px;background:#BFBFBF"><div class="abs" style="left:3px;top:5px;width:26px;height:26px;border-radius:13px;background:#fff;box-shadow:0 2px 4px rgba(0,0,0,0.2)"></div></div>
  <svg class="abs" style="left:14px;top:265px" width="32" height="32" viewBox="0 0 32 32"><circle cx="16" cy="16" r="12.8" fill="none" stroke="#262626" stroke-width="2.4"/><path d="M16 8.3 V19.2" stroke="#262626" stroke-width="2.6"/><circle cx="16" cy="23.4" r="1.6" fill="#262626"/></svg>
  <div class="t" style="left:53px;top:268px;font-size:28px;color:#262626">允许别人引用</div>
  <div class="abs" style="left:324px;top:263px;width:60px;height:36px;border-radius:18px;background:#BFBFBF"><div class="abs" style="left:3px;top:5px;width:26px;height:26px;border-radius:13px;background:#fff;box-shadow:0 2px 4px rgba(0,0,0,0.2)"></div></div>
</div>
<div class="abs" style="left:2899px;top:417px;width:410px;height:87px;border:6px solid #F53B3B;border-radius:9px;z-index:11"></div>
<svg class="abs" style="left:3100px;top:360px;z-index:12" width="170" height="70" viewBox="0 0 170 70"><path d="M152.8 16.4 L38.5 50.5 L36.3 44.2 L28.3 51.8 L39.2 54.9 L38.9 52.3 Z" fill="#F53B3B"/><path d="M152.8 16.2 L153 16.8 L39.8 52.8 L37.8 48 Z" fill="#F53B3B"/></svg>
</body></html>
